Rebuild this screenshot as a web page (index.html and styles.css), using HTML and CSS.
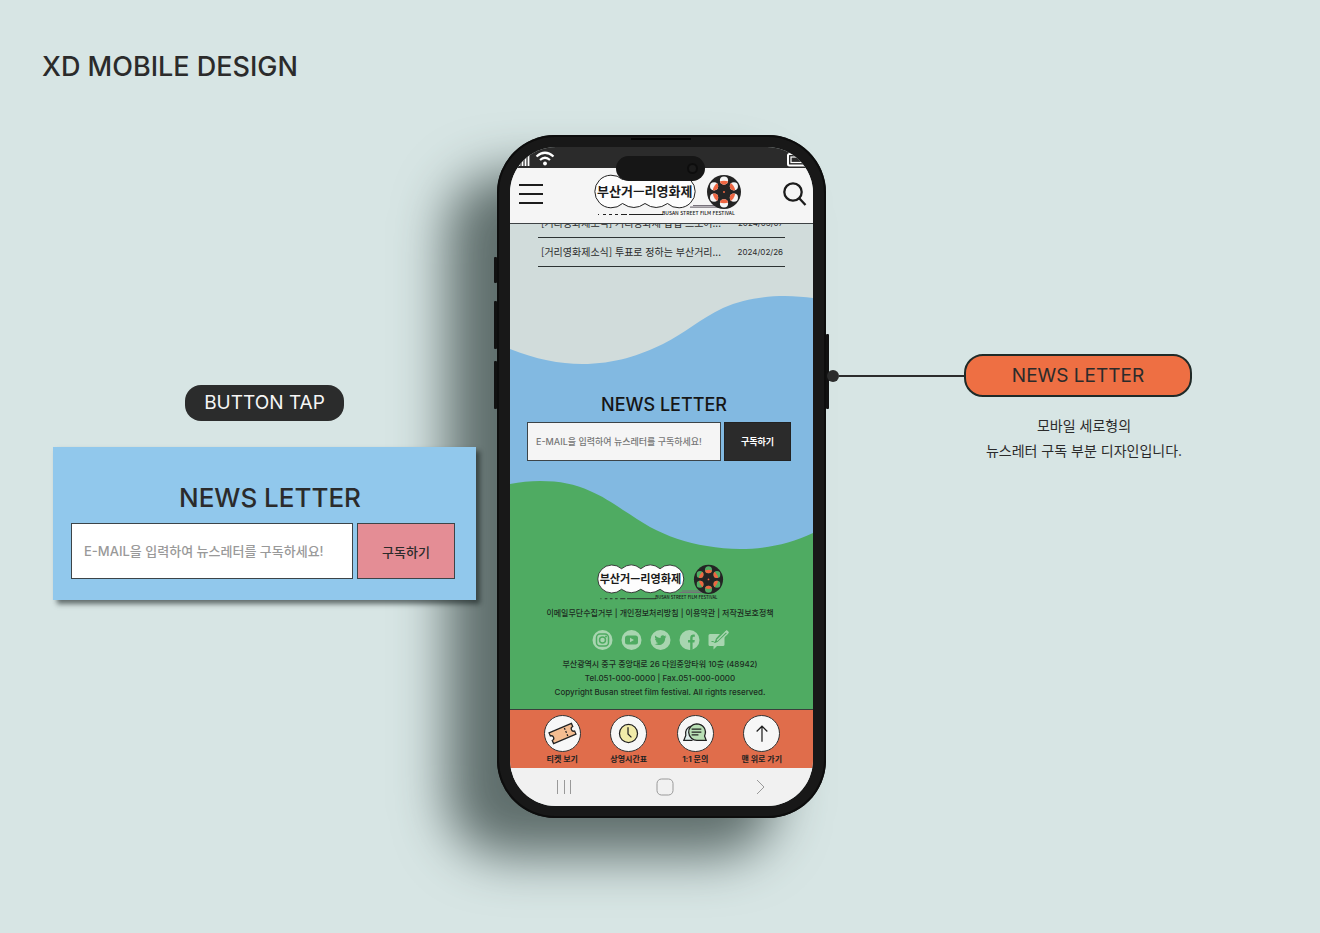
FILE: index.html
```html
<!DOCTYPE html>
<html lang="ko">
<head>
<meta charset="utf-8">
<meta name="viewport" content="width=device-width, initial-scale=1">
<title>XD Mobile Design</title>
<link rel="stylesheet" href="styles.css">
</head>
<body>
<svg class="defs" aria-hidden="true">
  <clipPath id="holes">
    <circle cx="131" cy="6.6" r="4.1"/><circle cx="131" cy="29.4" r="4.1"/>
    <circle cx="121.1" cy="12.3" r="4.1"/><circle cx="140.9" cy="12.3" r="4.1"/>
    <circle cx="121.1" cy="23.7" r="4.1"/><circle cx="140.9" cy="23.7" r="4.1"/>
  </clipPath>
  <symbol id="logo" viewBox="0 0 150 42">
    <path d="M100 31.500H128M97 33.200H135" stroke="#77717a" stroke-width="1.200"/>
    <path class="cloud" d="M29.500 5.500A16.500 16.300 0 1 0 29.500 29.500Q41 37.500 52 29.500Q63 37.500 74.500 29.500A16.500 16.300 0 1 0 74.500 5.500Q63 -3.500 52 5.500Q41 -3.500 29.500 5.500Z"/>
    <circle cx="131" cy="18" r="17" fill="#242424"/>
    <g clip-path="url(#holes)">
      <rect class="hole" x="112" y="0" width="38" height="38"/>
      <circle cx="131" cy="18" r="11.300" fill="#ee6642"/>
    </g>
    <circle cx="131" cy="18" r="1" fill="#ee6642"/>
    <path d="M5 40.500H6M10 40.500H13M16 40.500H19M22 40.500H25M28 40.500H34M36 40.500H70" stroke="#222" stroke-width="1"/>
  </symbol>
</svg>

<header class="page-head"><h1>XD MOBILE DESIGN</h1></header>

<main class="board">
  <section class="detail">
    <h2 class="tag">BUTTON TAP</h2>
    <div class="card">
      <h3>NEWS LETTER</h3>
      <form class="subscribe">
        <input type="email" aria-label="E-MAIL" placeholder="E-MAIL을 입력하여 뉴스레터를 구독하세요!">
        <button type="button">구독하기</button>
      </form>
    </div>
  </section>

  <section class="phone">
    <i class="key key-a"></i><i class="key key-b"></i><i class="key key-c"></i><i class="key key-d"></i>
    <i class="speaker"></i>
    <div class="island"><i></i></div>
    <div class="screen">
      <div class="status">
        <svg width="38" height="18" viewBox="0 0 38 18" fill="none" stroke="#fff">
          <path d="M1.500 17v-4M4.500 17v-6M7.500 17V8M10.500 17V6" stroke-width="1.800"/>
          <path d="M18.500 7.500Q27 0 35.500 7.500M22 11Q27 6.500 32 11" stroke-width="2.200"/>
          <circle cx="27" cy="14.500" r="1.900" fill="#fff" stroke="none"/>
        </svg>
        <svg width="18" height="14" viewBox="0 0 18 14" fill="none" stroke="#fff">
          <rect x="1" y="1" width="20" height="11.500" rx="1.500" stroke-width="2"/><rect x="4" y="4" width="14" height="5.500" stroke-width="1.200"/>
        </svg>
      </div>
      <div class="nav">
        <button type="button" aria-label="메뉴"><svg width="26" height="24" viewBox="0 0 26 24" stroke="#1c1c1c" stroke-width="2"><path d="M1 3h24M1 12h24M1 21h24"/></svg></button>
        <a href="#" class="brand"><svg width="150" height="42" viewBox="0 0 150 42"><use href="#logo"/><text x="4" y="22" class="logo-name">부산거—리영화제</text><text x="69" y="41" class="logo-sub">BUSAN STREET FILM FESTIVAL</text></svg></a>
        <button type="button" aria-label="검색"><svg width="24" height="24" viewBox="0 0 24 24" fill="none" stroke="#1c1c1c" stroke-width="2.300"><circle cx="10" cy="10" r="8.700"/><path d="M16 16l6.500 7"/></svg></button>
      </div>
      <ul class="news">
        <li class="cut"><a href="#">[거리영화제소식] 거리영화제 팝업 스토어...</a><time>2024/03/07</time></li>
        <li><a href="#">[거리영화제소식] 투표로 정하는 부산거리...</a><time>2024/02/26</time></li>
      </ul>
      <svg class="wave wave-top" viewBox="0 0 303 68" preserveAspectRatio="none"><path fill="#82b9e1" d="M0 53C25 63 50 68 72 68C105 68 130 59 153 48C175 37 190 23 213 12C233 3 255 0 275 0C285 0 295 1 303 2V68H0Z"/></svg>
      <div class="letter">
        <h3>NEWS LETTER</h3>
        <form class="subscribe">
          <input type="email" aria-label="E-MAIL" placeholder="E-MAIL을 입력하여 뉴스레터를 구독하세요!">
          <button type="button">구독하기</button>
        </form>
      </div>
      <svg class="wave wave-low" viewBox="0 0 303 70" preserveAspectRatio="none"><path fill="#4fab62" d="M0 4C10 2 20 1 30 1C50 1 65 4 80 11C92 16 101 22 113 30C123 36 131 42 140 47C157 56 176 63 197 66C208 68 219 69 230 69C255 69 280 64 303 53V70H0Z"/></svg>
      <footer class="foot">
        <a href="#" class="brand"><svg width="129" height="36" viewBox="0 0 150 42"><use href="#logo"/><text x="4" y="22" class="logo-name">부산거—리영화제</text><text x="69" y="41" class="logo-sub">BUSAN STREET FILM FESTIVAL</text></svg></a>
        <p class="links"><a href="#">이메일무단수집거부</a> | <a href="#">개인정보처리방침</a> | <a href="#">이용약관</a> | <a href="#">저작권보호정책</a></p>
        <div class="social">
          <a href="#" aria-label="Instagram"><svg width="21" height="20" viewBox="0 0 21 20"><circle class="pale" cx="10.500" cy="10" r="10"/><g fill="none" stroke="#4fab62" stroke-width="1.500"><rect x="4.500" y="4" width="12" height="12" rx="3.500"/><circle cx="10.500" cy="10" r="3"/></g><circle cx="14" cy="6.500" r="1" fill="#4fab62"/></svg></a>
          <a href="#" aria-label="YouTube"><svg width="21" height="20" viewBox="0 0 21 20"><circle class="pale" cx="10.500" cy="10" r="10"/><rect x="4" y="5.500" width="13" height="9" rx="2.500" fill="#4fab62"/><path class="pale" d="M9 7.700v4.600l4-2.300z"/></svg></a>
          <a href="#" aria-label="Twitter"><svg width="21" height="20" viewBox="0 0 21 20"><circle class="pale" cx="10.500" cy="10" r="10"/><path fill="#4fab62" d="M16.500 6.500l-1.500.4c.6-.4.900-.9 1.100-1.400l-1.500.6c-1.800-1.700-4.500-.3-4 2C8.300 8 6.500 7 5.300 5.500c-.8 1.400-.3 2.700.7 3.500l-1-.3c0 1.200.8 2.100 1.900 2.500H5.800c.4 1 1.200 1.600 2.300 1.700-1 .8-2.200 1-3.600 1 4.900 2.900 10.800.1 10.700-6z"/></svg></a>
          <a href="#" aria-label="Facebook"><svg width="21" height="20" viewBox="0 0 21 20"><circle class="pale" cx="10.500" cy="10" r="10"/><path fill="#4fab62" d="M11.200 20v-7.500H9V10h2.200V8c0-2.500 1.500-3.700 4.600-3.300v2.200c-1.700-.2-2.200.2-2.200 1.300V10h2.200l-.4 2.500h-1.800v7z"/></svg></a>
          <a href="#" aria-label="Blog"><svg width="21" height="20" viewBox="0 0 21 20"><path class="pale" d="M2 4h10L8 8.500 6.500 13l4-1.500 6-5V14.500q0 1.500-1.500 1.500H9l-3.500 3.500V16H2q-1.500 0-1.500-1.500v-9Q.5 4 2 4z"/><path d="M9 10.500L18 1.500M10.500 12L20 3" fill="none" stroke="#a8d5b0" stroke-width="1.300"/><path class="pale" d="M17 1.500L18.800 0 21 2.200 19.500 4z"/><path d="M3.500 11.500q2-.3 3 .8l2.500-.8" stroke="#4fab62" fill="none"/></svg></a>
        </div>
        <address>부산광역시 중구 중앙대로 26 다원중앙타워 10층 (48942)<br>Tel.051-000-0000 | Fax.051-000-0000<br>Copyright Busan street film festival. All rights reserved.</address>
      </footer>
      <nav class="quick">
        <a href="#"><span><svg viewBox="0 0 36 36"><g transform="rotate(-23 18 18)"><path d="M5.500 12h25v3.500a2.500 2.500 0 0 0 0 5v3.500h-25v-3.500a2.500 2.500 0 0 0 0-5z" fill="#f4bd91"/><path d="M22 13.500v2M22 17v2M22 20.500v2"/></g></svg></span>티켓 보기</a>
        <a href="#"><span><svg viewBox="0 0 36 36"><circle cx="18" cy="18" r="9.300" fill="#f1eba9"/><path d="M17.500 11.500v7l3.500 3.500"/></svg></span>상영시간표</a>
        <a href="#"><span><svg viewBox="0 0 36 36"><path d="M14 10.500c-5 1-7 5-6 9.500l-2 5h9" fill="#dff0ee"/><path d="M19 8a8.500 8.500 0 1 0 1 17l9 0-1.700-4.500C30 14.500 26 8 19 8z" fill="#b9e0b5"/><path d="M14 13.500h10M14 16.500h10M14 19.500h7"/></svg></span>1:1 문의</a>
        <a href="#"><span><svg viewBox="0 0 36 36"><path d="M18.500 26.500v-16M13 16l5.500-5.500L24 16"/></svg></span>맨 위로 가기</a>
      </nav>
      <div class="system">
        <button type="button" aria-label="최근 앱"><svg width="18" height="18" viewBox="0 0 18 18"><path d="M2.500 2v14M9.500 2v14M15.500 2v14"/></svg></button>
        <button type="button" aria-label="홈"><svg width="18" height="18" viewBox="0 0 18 18"><rect x="1" y="1" width="16" height="16" rx="4.500"/></svg></button>
        <button type="button" aria-label="다음"><svg width="18" height="18" viewBox="0 0 18 18"><path d="M6 2l7 7-7 7"/></svg></button>
      </div>
    </div>
  </section>

  <section class="note">
    <div class="callout"><i class="dot"></i><i class="line"></i><h2>NEWS LETTER</h2></div>
    <p>모바일 세로형의<br>뉴스레터 구독 부분 디자인입니다.</p>
  </section>
</main>
</body>
</html>
```
FILE: styles.css
```css
* { box-sizing: border-box; }
body {
  margin: 0;
  min-height: 100vh;
  background: #d7e5e4;
  color: #2b2b2b;
  font-family: Inter, "Noto Sans CJK KR", sans-serif;
}
h1, h2, h3, p, ul { margin: 0; padding: 0; font-weight: 400; }
a { color: inherit; text-decoration: none; }
svg { display: block; }
button { font-family: inherit; padding: 0; border: 0; background: none; color: inherit; }
.defs { position: absolute; width: 0; height: 0; }

.page-head { padding: 51px 42px 0; }
.page-head h1 { font-size: 27px; line-height: 32px; font-weight: 500; }

.board {
  display: grid;
  grid-template-columns: 444fr 329px 366fr;
  align-items: start;
  margin-top: 52px;
  padding: 0 128px 0 53px;
}

/* tapped-state card */
.detail {
  position: relative;
  z-index: 2;
  display: flex;
  flex-direction: column;
  align-items: center;
  gap: 26px;
  margin-right: 21px;
  padding-top: 250px;
}
.tag {
  padding: 0 19px;
  border-radius: 16px;
  background: #2b2c2c;
  color: #f5f5f5;
  font-size: 19px;
  line-height: 36px;
}
.card {
  width: 100%;
  padding: 35px 21px 21px 18px;
  background: #91c8ec;
  box-shadow: 4px 4px 5px rgba(20, 30, 30, .6);
}
.card h3 {
  padding-left: 14px;
  margin-bottom: 9px;
  font-size: 26px;
  line-height: 32px;
  font-weight: 500;
  text-align: center;
}
.subscribe { display: flex; gap: 4px; }
.subscribe input {
  flex: 1;
  min-width: 0;
  padding: 0 12px;
  border: 1px solid #3c4448;
  border-radius: 0;
  background: #fff;
  font-family: inherit;
  font-size: 13px;
}
.subscribe input::placeholder { color: #999; font-weight: 500; opacity: 1; }
.subscribe button {
  width: 98px;
  height: 56px;
  border: 1px solid #3c4448;
  background: #e48d95;
  font-size: 13px;
  font-weight: 500;
}

/* phone body */
.phone {
  position: relative;
  padding: 12px 13px;
  border-radius: 58px;
  background: #181818;
  box-shadow: inset 0 0 0 2px #0d0d0d, -50px 38px 52px #5f6e6c;
}
.key { position: absolute; width: 3px; left: -3px; background: #111; border-radius: 1px; }
.key-a { top: 122px; height: 26px; }
.key-b { top: 166px; height: 48px; }
.key-c { top: 226px; height: 48px; }
.key-d { top: 199px; height: 75px; left: auto; right: -3px; }
.speaker { position: absolute; top: 3px; left: 134px; width: 60px; height: 2px; background: #050505; }
.island {
  position: absolute;
  z-index: 2;
  top: 21px;
  left: 119px;
  width: 89px;
  height: 25px;
  border-radius: 13px;
  background: #161616;
}
.island i { position: absolute; top: 7px; right: 7px; width: 11px; height: 11px; border: 2px solid #0d0d0d; border-radius: 50%; background: #1c1c1c; }
.screen { overflow: hidden; border-radius: 46px; background: #d1dcdb; }

.status { display: flex; justify-content: space-between; align-items: flex-end; height: 21px; padding: 0 8px 1px; background: #2b2b2b; }
.nav {
  display: flex;
  justify-content: space-between;
  align-items: flex-start;
  height: 56px;
  padding: 6px 6px 0 8px;
  border-bottom: 1px solid #3d4244;
  background: #f5f5f5;
}
.nav button { padding-top: 8px; }
.nav .brand { margin-left: 8px; }

.cloud { fill: #fdfdfd; stroke: #222; stroke-width: 1px; }
.hole { fill: var(--hole, #f5f5f5); }
.logo-name { font: 700 13px "Noto Sans CJK KR", sans-serif; fill: #1a1a1a; }
.logo-sub { font: 500 5px "Noto Sans CJK KR", sans-serif; fill: #1a1a1a; }

.news { margin: 0 28px; list-style: none; }
.news li {
  display: flex;
  justify-content: space-between;
  align-items: center;
  height: 29px;
  padding: 0 2px 0 3px;
  border-bottom: 1px solid #2d3333;
  font-size: 10px;
  line-height: 16px;
  white-space: nowrap;
}
.news a { font-family: "Noto Sans CJK KR", sans-serif; }
.news time { font-size: 8px; }
.news .cut { height: 14px; align-items: flex-end; overflow: hidden; padding-bottom: 6px; }
.wave { width: 100%; }
.wave-top { height: 68px; margin-top: 29px; }
.wave-low { height: 70px; background: #82b9e1; }

.letter { padding: 29px 22px 19px 17px; background: #82b9e1; }
.letter h3 { padding-left: 10px; margin-bottom: 5px; color: #161616; font-size: 18px; line-height: 24px; font-weight: 500; text-align: center; }
.letter .subscribe { gap: 3px; }
.letter input { padding: 0 8px; background: #f5f5f5; font-size: 9px; }
.letter input::placeholder { color: #777; }
.letter button { width: 67px; height: 39px; border-color: #222; background: #2b2b2b; color: #fff; font-size: 9px; font-weight: 700; }

.foot {
  --hole: #4fab62;
  display: flex;
  flex-direction: column;
  align-items: center;
  padding: 14px 3px 10px 0;
  background: #4fab62;
  color: #1c2b21;
  font-size: 8px;
  line-height: 14px;
  font-weight: 500;
  text-align: center;
  white-space: nowrap;
}
.links { margin: 6px 0 10px; font-weight: 500; }
.social { display: flex; gap: 8px; margin-bottom: 7px; }
.pale { fill: #a8d5b0; }
.foot address { font-style: normal; }

.quick {
  display: grid;
  grid-template-columns: repeat(4, 1fr);
  height: 59px;
  padding: 5px 18px 0 19px;
  border-top: 1px solid #3a3f3c;
  background: #e06d4b;
}
.quick a {
  display: flex;
  flex-direction: column;
  align-items: center;
  gap: 1px;
  color: #222;
  font-size: 8px;
  line-height: 12px;
  font-weight: 700;
  white-space: nowrap;
}
.quick span { width: 37px; height: 37px; border: 1px solid #333; border-radius: 50%; background: #f7f7f7; }
.quick svg { fill: none; stroke: #222; stroke-width: 1.3px; }

.system {
  display: grid;
  grid-template-columns: 98fr 104fr 86fr;
  place-items: center;
  height: 38px;
  padding: 0 10px 0 5px;
  background: #f1f1f1;
}
.system svg { fill: none; stroke: #999; stroke-width: 1px; }

/* callout */
.note { padding-top: 219px; position: relative; z-index: 2; }
.callout { display: flex; align-items: center; }
.dot { width: 12px; height: 12px; margin-left: 1px; border-radius: 50%; background: #2b2c2c; }
.line { flex: 1; height: 2px; background: #2b2c2c; }
.callout h2 {
  width: 228px;
  border: 2px solid #1f2a28;
  border-radius: 19px;
  background: #ee6f43;
  font-size: 19px;
  line-height: 39px;
  text-align: center;
}
.note p {
  width: 228px;
  margin: 16px 0 0 auto;
  padding-left: 12px;
  font-size: 14px;
  line-height: 25px;
  text-align: center;
  white-space: nowrap;
}
```
